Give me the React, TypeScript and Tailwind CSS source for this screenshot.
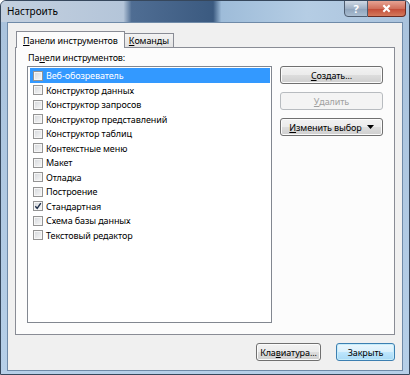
import type { ReactNode } from "react";

const items = [
  "Веб-обозреватель",
  "Конструктор данных",
  "Конструктор запросов",
  "Конструктор представлений",
  "Конструктор таблиц",
  "Контекстные меню",
  "Макет",
  "Отладка",
  "Построение",
  "Стандартная",
  "Схема базы данных",
  "Текстовый редактор",
];

function U({ children }: { children: ReactNode }) {
  return <span className="underline underline-offset-[1px]">{children}</span>;
}

function Check({ checked }: { checked?: boolean }) {
  return (
    <span className="relative flex h-[10px] w-[10px] shrink-0 items-center justify-center border border-[#949494] bg-[linear-gradient(135deg,#d4d7db,#f8f8f8)] shadow-[inset_0_0_0_1px_#f6f6f6]">
      {checked && (
        <svg viewBox="0 0 10 10" className="absolute -left-[1px] -top-[1px] h-[10px] w-[10px]">
          <path d="M2.3 5.2 L4.2 7.4 L7.8 2.2" fill="none" stroke="#1f2f4a" strokeWidth="1.4" />
        </svg>
      )}
    </span>
  );
}

function Btn({
  children,
  disabled,
  primary,
  className = "",
}: {
  children: ReactNode;
  disabled?: boolean;
  primary?: boolean;
  className?: string;
}) {
  const look = disabled
    ? "border-[#b8bcc0] bg-[#f4f4f4] text-[#a0a0a0]"
    : primary
    ? "border-[#3c7fb1] bg-[linear-gradient(180deg,#eaf6fd_0%,#d9f0fc_50%,#bee6fd_51%,#a7d9f5_100%)] text-black shadow-[inset_0_0_0_1px_#c6ecfa]"
    : "border-[#707070] bg-[linear-gradient(180deg,#f2f2f2_0%,#ebebeb_50%,#dddddd_51%,#cfcfcf_100%)] text-black shadow-[inset_0_0_0_1px_#fbfbfb]";
  return (
    <div
      className={`flex h-[18px] items-center justify-center rounded-[3px] border text-[9px] leading-none ${look} ${className}`}
    >
      {children}
    </div>
  );
}

export default function App() {
  return (
    <div
      className="flex h-[375px] w-[410px] flex-col overflow-hidden rounded-t-[6px] border border-[#36475c] bg-[linear-gradient(180deg,#a9c2dc,#b6cfe8)] text-black"
      style={{ fontFamily: '"Noto Sans", "Open Sans", sans-serif' }}
    >
      {/* title bar */}
      <div className="relative flex h-[21px] shrink-0 items-center bg-[linear-gradient(90deg,#c3d0df_0%,#b4c5d9_30%,#4f6d93_32%,#3b5a80_52%,#9ebcd9_54%,#b5cde4_75%,#a9c2dc_100%)] pb-[2px] pl-[6px]">
        <span className="text-[10px] leading-none">Настроить</span>
        <div className="absolute right-[3px] top-[-1px] flex">
          <div className="flex h-[17px] w-[24px] items-center justify-center rounded-bl-[4px] border border-[#4e5d70] bg-[linear-gradient(180deg,#cfd9e5,#9fb1c6_50%,#8ea3bb_51%,#a9bdd1)] text-[11px] font-bold leading-none text-white">
            ?
          </div>
          <div className="flex h-[17px] w-[38px] items-center justify-center rounded-br-[4px] border border-l-0 border-[#6b2b22] bg-[linear-gradient(180deg,#e7a393,#d1705c_50%,#c24a36_51%,#d4795c)]">
            <svg viewBox="0 0 10 10" className="h-[9px] w-[9px]">
              <path d="M1.5 1.5 L8.5 8.5 M8.5 1.5 L1.5 8.5" stroke="white" strokeWidth="2.4" />
            </svg>
          </div>
        </div>
      </div>

      {/* client */}
      <div className="mx-[6px] flex flex-1 flex-col border border-[#6f8aa8] bg-[#f0f0f0]">
        <div className="flex h-[347px] flex-col px-[7px] pt-[8px] tracking-[-0.1px]">
          {/* tabs */}
          <div className="flex items-end pl-[1px]">
            <div className="relative z-10 -mb-[1px] flex h-[17px] items-center border border-b-0 border-[#898c95] bg-[#fcfcfc] px-[6px] text-[9px] leading-none">
              <U>П</U>анели инструментов
            </div>
            <div className="flex h-[14px] items-center border border-b-0 border-l-0 border-[#898c95] bg-[linear-gradient(180deg,#f3f3f3,#e3e3e3)] px-[4px] text-[9px] leading-none">
              <U>К</U>оманды
            </div>
          </div>
          {/* panel */}
          <div className="flex h-[288px] flex-col border border-[#898c95] bg-[#fcfcfc] px-[11px] pt-[3px]">
            <div className="h-[14px] pl-[1px] text-[9px] leading-[14px]">
              Па<U>н</U>ели инструментов:
            </div>
            <div className="flex gap-[8px] pt-[1px]">
              <div className="h-[257px] w-[245px] border border-[#828790] bg-white pl-[2px] pr-[1px] pt-[1px]">
                {items.map((it, i) => (
                  <div
                    key={it}
                    className={`flex h-[14.5px] items-center gap-[3px] pl-[3px] pt-[1px] text-[9px] leading-none ${
                      i === 0 ? "bg-[#3399ff] text-white" : ""
                    }`}
                  >
                    <Check checked={it === "Стандартная"} />
                    <span>{it}</span>
                  </div>
                ))}
              </div>
              <div className="flex w-[103px] flex-col gap-[8px]">
                <Btn>
                  <U>С</U>оздать...
                </Btn>
                <Btn disabled>
                  <U>У</U>далить
                </Btn>
                <Btn>
                  <U>И</U>зменить выбор
                  <svg viewBox="0 0 7 4" className="ml-[5px] h-[4px] w-[7px]">
                    <path d="M0 0 H7 L3.5 4 Z" fill="black" />
                  </svg>
                </Btn>
              </div>
            </div>
          </div>
          {/* bottom buttons */}
          <div className="flex justify-end gap-[15px] pt-[8px]">
            <Btn className="w-[65px]">
              Кла<U>в</U>иатура...
            </Btn>
            <Btn primary className="w-[59px]">
              Закрыть
            </Btn>
          </div>
        </div>
      </div>
      <div className="h-[5px] shrink-0" />
    </div>
  );
}
